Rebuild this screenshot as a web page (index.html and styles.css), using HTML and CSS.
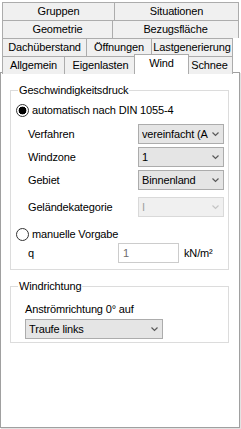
FILE: index.html
```html
<!DOCTYPE html>
<html lang="de">
<head>
<meta charset="utf-8">
<title>Wind</title>
<link rel="stylesheet" href="styles.css">
</head>
<body>
<div class="tabs">
  <div class="row">
    <div class="tab w113">Gruppen</div>
    <div class="tab w125">Situationen</div>
  </div>
  <div class="row">
    <div class="tab w111">Geometrie</div>
    <div class="tab w127">Bezugsfläche</div>
  </div>
  <div class="row">
    <div class="tab w85">Dachüberstand</div>
    <div class="tab w66">Öffnungen</div>
    <div class="tab w82">Lastgenerierung</div>
  </div>
  <div class="row">
    <div class="tab w63">Allgemein</div>
    <div class="tab w73">Eigenlasten</div>
    <div class="tab sel">Wind</div>
    <div class="tab w47">Schnee</div>
  </div>
</div>
<div class="panel">
  <fieldset class="group g1">
    <legend>Geschwindigkeitsdruck</legend>
    <div class="radio-row r-first"><span class="radio checked"></span><span>automatisch nach DIN 1055-4</span></div>
    <div class="field f-first"><span class="lbl">Verfahren</span><div class="select w86"><span class="val">vereinfacht (A</span><svg class="chev" width="7" height="5" viewBox="0 0 7 5"><polyline points="0.5,0.5 3.5,3.5 6.5,0.5" fill="none" stroke="#5a5a5a" stroke-width="1.2"/></svg></div></div>
    <div class="field f-next"><span class="lbl">Windzone</span><div class="select w86"><span class="val">1</span><svg class="chev" width="7" height="5" viewBox="0 0 7 5"><polyline points="0.5,0.5 3.5,3.5 6.5,0.5" fill="none" stroke="#5a5a5a" stroke-width="1.2"/></svg></div></div>
    <div class="field f-next"><span class="lbl">Gebiet</span><div class="select w86"><span class="val">Binnenland</span><svg class="chev" width="7" height="5" viewBox="0 0 7 5"><polyline points="0.5,0.5 3.5,3.5 6.5,0.5" fill="none" stroke="#5a5a5a" stroke-width="1.2"/></svg></div></div>
    <div class="field f-gel"><span class="lbl">Geländekategorie</span><div class="select w86 disabled"><span class="val">I</span><svg class="chev" width="7" height="5" viewBox="0 0 7 5"><polyline points="0.5,0.5 3.5,3.5 6.5,0.5" fill="none" stroke="#c4c4c4" stroke-width="1.2"/></svg></div></div>
    <div class="radio-row r-second"><span class="radio"></span><span>manuelle Vorgabe</span></div>
    <div class="field f-q"><span class="lbl lbl-q">q</span><div class="input">1</div><span class="unit">kN/m²</span></div>
  </fieldset>
  <fieldset class="group g2">
    <legend>Windrichtung</legend>
    <div class="plain">Anströmrichtung 0° auf</div>
    <div class="select w138 s-dir"><span class="val">Traufe links</span><svg class="chev" width="7" height="5" viewBox="0 0 7 5"><polyline points="0.5,0.5 3.5,3.5 6.5,0.5" fill="none" stroke="#5a5a5a" stroke-width="1.2"/></svg></div>
  </fieldset>
</div>
</body>
</html>
```
FILE: styles.css
```css
* { box-sizing: border-box; }
html, body { margin: 0; padding: 0; background: #fff; }
body {
  font-family: "Liberation Sans", Arial, sans-serif;
  font-size: 11px;
  letter-spacing: -0.15px;
  color: #000;
  width: 241px;
  height: 429px;
  overflow: hidden;
}
.tabs { padding-top: 2px; position: relative; z-index: 2; }
.row { display: flex; height: 18px; padding-left: 2px; }
.tab {
  height: 18px;
  border: 1px solid #acacac;
  border-bottom: none;
  background: #f0f0f0;
  text-align: center;
  line-height: 16px;
  white-space: nowrap;
  overflow: hidden;
}
.tab + .tab { margin-left: -1px; }
.w113 { width: 113px; }
.w125 { width: 125px; }
.w111 { width: 111px; }
.w127 { width: 127px; }
.w85 { width: 85px; }
.w66 { width: 66px; }
.w82 { width: 82px; }
.w63 { width: 63px; }
.w73 { width: 73px; }
.w47 { width: 47px; }
.tab.sel {
  width: 55px;
  height: 20px;
  margin-top: -2px;
  margin-left: -3px;
  margin-right: -2px;
  background: #fff;
  position: relative;
  z-index: 2;
  line-height: 16px;
}
.panel {
  margin-top: -2px;
  width: 240px;
  height: 356px;
  border: 1px solid #a0a0a0;
  background: #fff;
  box-shadow: 1px 1px 0 #e3e3e3;
  padding: 11px 0 0 9px;
  display: flex;
  flex-direction: column;
  position: relative;
  z-index: 1;
}
.group {
  margin: 0;
  width: 219px;
  border: 1px solid #dcdcdc;
  padding: 0;
  min-width: 0;
  display: flex;
  flex-direction: column;
}
.group legend {
  margin-left: 7px;
  padding: 0 1px;
  line-height: 13px;
  height: 13px;
}
.g1 { padding-bottom: 6px; }
.g2 { margin-top: 10px; padding-bottom: 3px; }
.radio-row {
  display: flex;
  align-items: center;
  height: 13px;
  line-height: 13px;
  padding-left: 5px;
  gap: 3px;
}
.r-first { margin-top: 7px; }
.r-second { margin-top: 11px; }
.radio {
  width: 13px;
  height: 13px;
  border: 1px solid #333;
  border-radius: 50%;
  background: #fff;
  flex: none;
}
.radio.checked {
  background: radial-gradient(circle, #000 0 3.6px, #fff 4.2px);
}
.field {
  display: flex;
  align-items: center;
  height: 20px;
  padding-left: 17px;
}
.f-first { margin-top: 7px; }
.f-next { margin-top: 3px; }
.f-gel { margin-top: 7px; }
.f-q { margin-top: 2px; }
.lbl { width: 110px; flex: none; white-space: nowrap; }
.lbl-q { width: 90px; }
.select {
  height: 20px;
  border: 1px solid #acacac;
  background: #e5e5e5;
  display: flex;
  align-items: center;
  padding: 0 4px 0 3px;
  flex: none;
}
.select .val {
  flex: 1;
  overflow: hidden;
  white-space: nowrap;
  line-height: 18px;
}
.select .chev { flex: none; margin-left: 3px; }
.select.disabled {
  background: #f0f0f0;
  border-color: #d9d9d9;
  color: #a0a0a0;
}
.w86 { width: 86px; }
.w138 { width: 138px; }
.input {
  width: 61px;
  height: 20px;
  border: 1px solid #cccccc;
  background: #fff;
  color: #6d6d6d;
  padding-left: 4px;
  line-height: 18px;
  flex: none;
}
.unit { margin-left: 5px; white-space: nowrap; }
.plain {
  margin-top: 10px;
  padding-left: 14px;
  line-height: 13px;
  height: 13px;
  white-space: nowrap;
}
.s-dir { margin-top: 3px; margin-left: 14px; }
```
